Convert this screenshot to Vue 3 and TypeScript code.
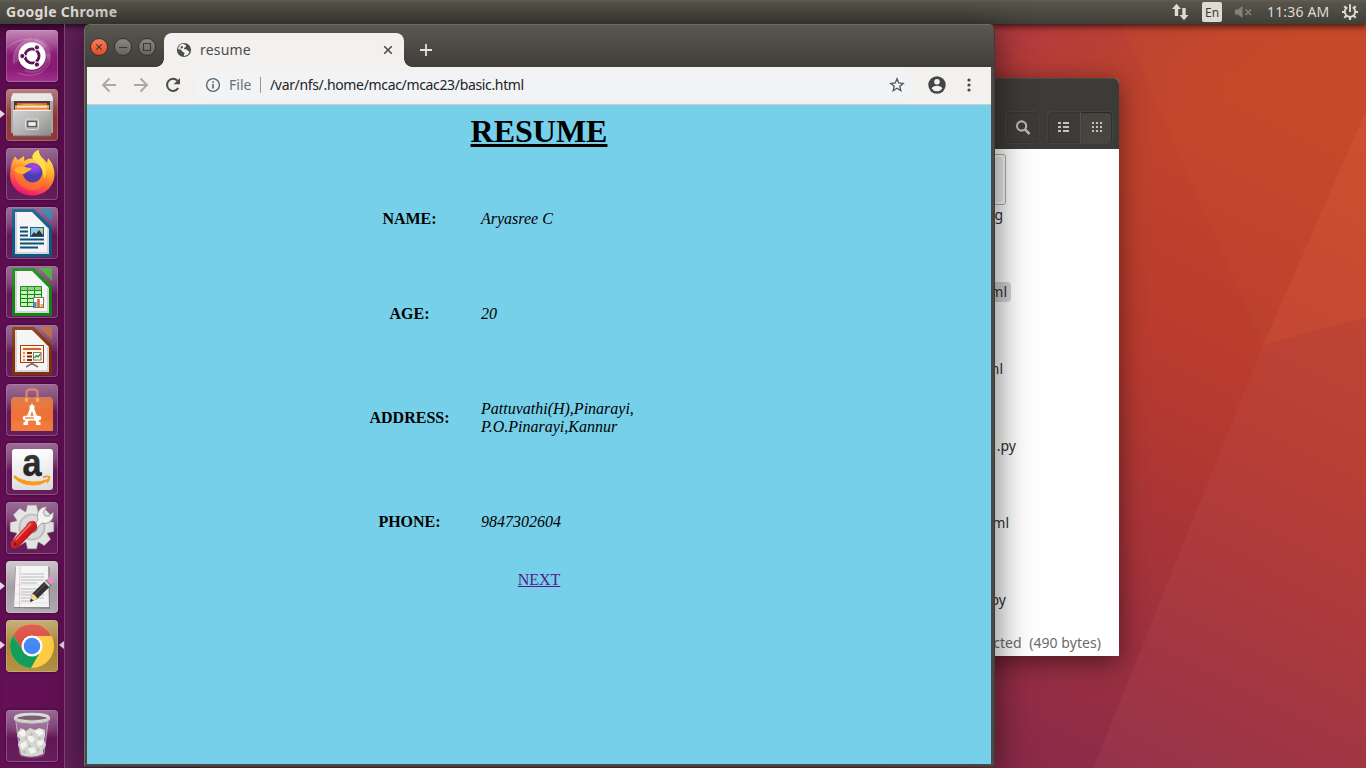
<script setup lang="ts">
interface Entry {
  label: string
  lines: string[]
  height: string
}

interface FileRow {
  name: string
  end: number
  selected?: boolean
}

const entries: Entry[] = [
  { label: 'NAME:', lines: ['Aryasree C'], height: 'short' },
  { label: 'AGE:', lines: ['20'], height: 'short' },
  { label: 'ADDRESS:', lines: ['Pattuvathi(H),Pinarayi,', 'P.O.Pinarayi,Kannur'], height: 'tall' },
  { label: 'PHONE:', lines: ['9847302604'], height: 'short' },
]

const files: FileRow[] = [
  { name: 'g', end: 116 },
  { name: 'ml', end: 108, selected: true },
  { name: 'ml', end: 116 },
  { name: '.py', end: 103 },
  { name: 'ml', end: 110 },
  { name: 'py', end: 113 },
]

const gearTeeth = [0, 45, 90, 135, 180, 225, 270, 315]
const gridDots = [0, 1, 2]
const paperLines = [13, 16, 19, 22, 28, 31, 34, 37, 40]
</script>

<template>
  <div class="desktop">
    <svg class="wallpaper" viewBox="0 0 1366 768" preserveAspectRatio="none">
      <defs>
        <linearGradient id="wall" gradientUnits="userSpaceOnUse" x1="1330" y1="130" x2="980" y2="830">
          <stop offset="0" stop-color="#c4472a" />
          <stop offset=".38" stop-color="#b73a2f" />
          <stop offset=".6" stop-color="#a53339" />
          <stop offset="1" stop-color="#82274f" />
        </linearGradient>
        <linearGradient id="wallLeft" x1="0" y1="0" x2="1" y2="0">
          <stop offset="0" stop-color="#6a2362" />
          <stop offset="1" stop-color="#5d1d56" />
        </linearGradient>
        <linearGradient id="wallTop" gradientUnits="userSpaceOnUse" x1="990" y1="20" x2="1130" y2="180">
          <stop offset="0" stop-color="#a8344c" stop-opacity=".75" />
          <stop offset="1" stop-color="#b23a35" stop-opacity="0" />
        </linearGradient>
      </defs>
      <rect width="1366" height="768" fill="url(#wall)" />
      <rect x="800" width="566" height="500" fill="url(#wallTop)" />
      <path d="M1121 24H1366V110L1263 345Z" fill="#d0602f" fill-opacity=".13" />
      <path d="M1366 110V317L1263 345Z" fill="#ea6c45" fill-opacity=".22" />
      <path d="M1263 345L1366 317V768H1093Z" fill="#c86464" fill-opacity=".13" />
      <rect width="200" height="768" fill="url(#wallLeft)" />
    </svg>

    <section class="files-window">
      <header class="files-header">
        <span class="tool single">
          <svg width="18" height="18" viewBox="0 0 18 18"><circle cx="7.6" cy="7" r="4.6" fill="none" stroke="#b9b6ac" stroke-width="2.1" /><path d="M11 10.4L15.5 15" stroke="#b9b6ac" stroke-width="2.6" /></svg>
        </span>
        <span class="tool-group">
          <span class="tool">
            <svg width="14" height="14" viewBox="0 0 14 14" fill="#c5c2b8"><template v-for="n in gridDots" :key="n"><rect x="1" :y="1 + n * 4" width="3" height="2" /><rect x="6" :y="1 + n * 4" width="6" height="2" /></template></svg>
          </span>
          <span class="tool active">
            <svg width="14" height="14" viewBox="0 0 14 14" fill="#c5c2b8"><template v-for="n in gridDots" :key="n"><rect v-for="m in gridDots" :key="m" :x="2 + m * 4" :y="1 + n * 4" width="2" height="2" /></template></svg>
          </span>
        </span>
      </header>
      <div class="files-body">
        <div class="thumb-row"><span class="thumb"></span></div>
        <div v-for="(file, i) in files" :key="i" class="file-row" :style="{ paddingRight: file.end + 'px' }">
          <span :class="{ selected: file.selected }">{{ file.name }}</span>
        </div>
        <div class="files-status">cted&nbsp; (490 bytes)</div>
      </div>
    </section>

    <header class="panel">
      <span class="panel-title">Google Chrome</span>
      <div class="indicators">
        <svg class="net" width="18" height="18" viewBox="0 0 18 18" fill="#dfdbd2"><path d="M5.5 .8L10 6H7.2V13H3.8V6H1ZM13 17.2L8.5 12H11.3V5H14.7V12H17.5Z" /></svg>
        <span class="lang">En</span>
        <svg class="mute" width="18" height="14" viewBox="0 0 18 14" fill="#858279"><path d="M0 4.5H3L7.5 1V13L3 9.5H0Z" /><path d="M10.5 4.5L16 10M16 4.5L10.5 10" stroke="#858279" stroke-width="1.7" /></svg>
        <span class="clock">11:36 AM</span>
        <svg class="power" width="18" height="18" viewBox="0 0 18 18"><g stroke="#dfdbd2" fill="none"><path d="M6.3 4.3A5.2 5.2 0 1 0 11.7 4.3" stroke-width="1.9" /><path d="M9 1.2V9" stroke-width="1.9" /><path d="M1 9H4M14 9H17M9 14V17M3.3 3.3L5.3 5.3M12.7 5.3L14.7 3.3M3.3 14.7L5.3 12.7M12.7 12.7L14.7 14.7" stroke-width="2.2" /></g></svg>
      </div>
    </header>

    <nav class="launcher">
      <div class="tile dash">
        <svg viewBox="0 0 52 52">
          <path d="M8 33C5 10 32 3 40 17L26 26ZM44 23C43 38 33 47 18 41L26 26Z" fill="#fff" fill-opacity=".15" />
          <path d="M27 8C42 8 47 20 43 31L33 14Z" fill="#fff" fill-opacity=".14" />
          <path d="M1 18C14 5 36 8 40 17M44 24C46 40 30 50 12 43M8 34C6 22 12 12 26 8" fill="none" stroke="#e9b5dc" stroke-opacity=".35" />
          <circle cx="26" cy="27" r="14" fill="#3c0434" fill-opacity=".45" />
          <circle cx="26" cy="26" r="13.7" fill="#fff" />
          <circle cx="26" cy="26" r="7" fill="none" stroke="#5e1151" stroke-width="3" />
          <path d="M26 26L14 26M26 26L32 15.6M26 26L32 36.4" stroke="#fff" stroke-width="1.2" />
          <g fill="#5e1151" stroke="#fff" stroke-width="1"><circle cx="16.3" cy="26" r="2.6" /><circle cx="30.9" cy="17.4" r="2.6" /><circle cx="30.9" cy="34.6" r="2.6" /></g>
          <circle cx="26" cy="26" r="5.4" fill="#fff" />
        </svg>
      </div>
      <div class="tile cabinet">
        <i class="running"></i>
        <svg viewBox="0 0 52 52">
          <defs><linearGradient id="cab" x1="0" y1="0" x2="1" y2="1"><stop offset="0" stop-color="#d2d2d1" /><stop offset=".5" stop-color="#b5b5b3" /><stop offset="1" stop-color="#8c8c89" /></linearGradient></defs>
          <path d="M7 4.2H45L47 9V44H5V9Z" fill="#a9a9a6" />
          <path d="M7 4.2H45L47 9V12H5V9Z" fill="#e6e6e4" />
          <rect x="8" y="12" width="36" height="10" fill="#3a302b" />
          <path d="M11 14H41V22H11Z" fill="#d0602e" /><path d="M9 16.5L20 15L43 16V22H9Z" fill="#f5a35a" />
          <path d="M11 17.8H41" stroke="#fff" stroke-width="1" /><path d="M9 19.6H43" stroke="#dc7632" stroke-width=".7" />
          <path d="M7 21H45V47H7Z" fill="url(#cab)" /><path d="M7 21.5H45" stroke="#f1f1f0" /><path d="M7 47H45" stroke="#6b6b69" />
          <rect x="19.5" y="30" width="13" height="10.5" rx="2" fill="#aaa" stroke="#e0e0df" />
          <rect x="21.8" y="32.5" width="8.5" height="5" fill="#f0f0ef" stroke="#555" stroke-width="1.2" />
        </svg>
      </div>
      <div class="tile">
        <svg viewBox="0 0 52 52">
          <defs>
            <linearGradient id="fox" x1=".8" y1="0" x2=".4" y2="1"><stop offset="0" stop-color="#fff04a" /><stop offset=".35" stop-color="#ffc02d" /><stop offset=".62" stop-color="#ff7531" /><stop offset="1" stop-color="#f21471" /></linearGradient>
            <radialGradient id="globe" cx=".6" cy=".2"><stop offset="0" stop-color="#b72fee" /><stop offset=".5" stop-color="#7642e5" /><stop offset="1" stop-color="#4b3cb0" /></radialGradient>
          </defs>
          <path d="M5 18C6 13 8 10 9 8.5L12 12L18 8L18.5 13C22 10 25 10 27 11C25 7 29 3 33 2C32 8 38 10 41 15L42 10C46 14 48 19 48.5 25C49 38 39 47.5 26 47.5C13 47.5 3.5 38 4 26Z" fill="url(#fox)" />
          <path d="M10 18C14 14 19 17 26 20C25 22 22 22 21 24C18 27 19 31 22 33C28 37 35 34 37 29C42 40 27 46 18 40C8 34 7 25 10 18Z" fill="#ff8a22" fill-opacity=".5" />
          <circle cx="26.5" cy="24.5" r="9.8" fill="url(#globe)" />
          <path d="M8 22C12 16 19 19 26 20.5C24 23 21 23.5 18 26C14 26 10 25 8 22Z" fill="#ffb02b" />
          <path d="M27 11C25 7 29 3 33 2C32 11 45 15 38.5 31C37.5 21 33 15 27 11Z" fill="#ffdf3f" fill-opacity=".85" />
        </svg>
      </div>
      <div class="tile">
        <svg viewBox="0 0 52 52">
          <path d="M7 2H28L46 20V48Q46 50 44 50H8Q6 50 6 48V3Z" fill="#0d5985" />
          <path d="M33 2H44Q46 2 46 4V15Z" fill="#2d7eac" />
          <path d="M9 5H26L43 22V47H9Z" fill="#f5f5f5" /><path d="M10 5V46H42V22" fill="none" stroke="#d4d6d8" stroke-width="2" />
          <path d="M14 20.5H22M14 24.5H22M14 28.5H22M14 32.5H38M14 36.5H38M14 40.5H32" stroke="#0e5179" stroke-width="2" />
          <rect x="24.5" y="20.5" width="13" height="9" fill="#8fcbed" stroke="#12618e" /><circle cx="35.5" cy="22.5" r="1.6" fill="#f3c52e" /><path d="M25 29L28 25L30 27L33 23L37 28V29Z" fill="#333" />
        </svg>
      </div>
      <div class="tile">
        <svg viewBox="0 0 52 52">
          <path d="M7 2H28L46 20V48Q46 50 44 50H8Q6 50 6 48V3Z" fill="#158415" />
          <path d="M33 2H44Q46 2 46 4V15Z" fill="#41ad35" />
          <path d="M9 5H26L43 22V47H9Z" fill="#f5f5f5" /><path d="M10 5V46H42V22" fill="none" stroke="#d4d6d8" stroke-width="2" />
          <rect x="14.5" y="20.5" width="21" height="20" fill="#c9f3c1" /><path d="M14.5 20.5H35.5V40.5H14.5ZM14.5 24.5H35.5M14.5 28.5H35.5M14.5 32.5H35.5M14.5 36.5H35.5M21.5 20V40M28.5 20V40" fill="none" stroke="#118510" />
          <rect x="14.5" y="20.5" width="21" height="4" fill="#48b33e" fill-opacity=".5" />
          <rect x="27.5" y="31.5" width="10" height="10" fill="#fff" stroke="#777" /><path d="M29.3 36V41" stroke="#2491df" stroke-width="2.4" /><path d="M32.5 33V41" stroke="#e25f1d" stroke-width="2.6" /><path d="M35.7 38V41" stroke="#f1b719" stroke-width="2.4" />
        </svg>
      </div>
      <div class="tile">
        <svg viewBox="0 0 52 52">
          <path d="M7 2H28L46 20V48Q46 50 44 50H8Q6 50 6 48V3Z" fill="#813209" />
          <path d="M33 2H44Q46 2 46 4V15Z" fill="#b66437" />
          <path d="M9 5H26L43 22V47H9Z" fill="#f5f5f5" /><path d="M10 5V46H42V22" fill="none" stroke="#d4d6d8" stroke-width="2" />
          <path d="M26 38V40M26 38.5L20 42M26 38.5L32 42" stroke="#777" stroke-width="1.8" />
          <rect x="14.5" y="20.5" width="23" height="17" fill="#fff4ea" stroke="#a23d08" /><path d="M17 24H35" stroke="#db5c1c" stroke-width="2" />
          <path d="M17 28H19M17 31.5H19M17 35H19" stroke="#ed8760" stroke-width="2" /><path d="M21 28H26M21 31.5H26M21 35H26" stroke="#7a2d08" stroke-width="2" />
          <rect x="27.5" y="27.5" width="7.5" height="7.5" fill="#fff" stroke="#777" /><path d="M28.5 33L30.5 30.5L32 32L34.5 29" fill="none" stroke="#28912a" stroke-width="1.3" />
        </svg>
      </div>
      <div class="tile">
        <svg viewBox="0 0 52 52">
          <defs><linearGradient id="bag" x1="0" y1="0" x2="0" y2="1"><stop offset="0" stop-color="#d77343" /><stop offset=".3" stop-color="#ec7539" /><stop offset="1" stop-color="#f07336" /></linearGradient></defs>
          <path d="M7 13H45L47 16V47H5V16Z" fill="url(#bag)" /><path d="M5 37H47V47H5Z" fill="#ff9b54" fill-opacity=".2" />
          <path d="M20.5 18V9Q20.5 5.5 24 5.5H28Q31.5 5.5 31.5 9V18" fill="none" stroke="#d27b54" stroke-width="2.4" /><path d="M20.5 14V18M31.5 14V18" stroke="#f4a377" stroke-width="3.2" />
          <path d="M19.7 40L26 23L32.3 40M17.5 39.5H22M30 39.5H34.5M23.5 23H28.5" fill="none" stroke="#fff" stroke-width="3" />
          <rect x="16.7" y="31.7" width="18.6" height="4.8" rx="2.4" fill="#fff" /><path d="M19 34H28" stroke="#ed7237" stroke-width="1.3" />
        </svg>
      </div>
      <div class="tile">
        <svg viewBox="0 0 52 52">
          <defs><linearGradient id="amz" x1="0" y1="0" x2="0" y2="1"><stop offset="0" stop-color="#fff" /><stop offset="1" stop-color="#dedede" /></linearGradient></defs>
          <rect x="6" y="6" width="41" height="41" rx="3" fill="url(#amz)" />
          <text x="26" y="33.2" class="amazon-letter" text-anchor="middle" textLength="19" lengthAdjust="spacingAndGlyphs">a</text>
          <path d="M8 34C17 43.5 33 44.5 42 36.5C32 40.5 19 40.5 8.5 33Z" fill="#f99b18" stroke="#f99b18" stroke-width="1.1" /><path d="M37 34.5Q41 32.5 43.3 33.8Q43.3 37 41 40" fill="none" stroke="#f99b18" stroke-width="1.8" />
        </svg>
      </div>
      <div class="tile">
        <svg viewBox="0 0 52 52">
          <defs><linearGradient id="red" x1="0" y1="0" x2="1" y2="1"><stop offset="0" stop-color="#ed6662" /><stop offset=".5" stop-color="#d51d20" /><stop offset="1" stop-color="#86080c" /></linearGradient></defs>
          <g fill="#e2e2e1" stroke="#a5a4a5" stroke-width=".5"><path v-for="a in gearTeeth" :key="a" d="M19.5 12L21.5 3.2H30.5L32.5 12Z" :transform="`rotate(${a} 26 25)`" /></g>
          <circle cx="26" cy="25" r="16.3" fill="#e4e4e3" /><circle cx="26" cy="25" r="13.5" fill="#bdbcbd" /><circle cx="26" cy="25" r="11.5" fill="#d9d8d8" /><circle cx="26" cy="25" r="6" fill="#8f6d8c" />
          <path d="M27 24L32 18C30 11 34 4 41 5L37 10L39 14L43 14L47 10C49 18 42 23 36 21L30 27Z" fill="#f4f4f3" stroke="#888" stroke-width=".8" />
          <path d="M6 39L24 19.5Q29 17.5 30.5 21.5Q32 25 30 27L13 44.5Q9 48 6 45.5Q3.5 42 6 39Z" fill="url(#red)" /><path d="M9.5 38L25 21.5" stroke="#ef7775" stroke-width="1.5" /><circle cx="9" cy="42" r="1.6" fill="#7b1722" />
        </svg>
      </div>
      <div class="tile editor">
        <i class="running"></i>
        <svg viewBox="0 0 52 52">
          <path d="M9 6H44V48L8 47Z" fill="#746e74" fill-opacity=".6" /><path d="M10 5H42L43 46H8Z" fill="#f4f4f4" />
          <g stroke="#aaa" stroke-width=".8"><path v-for="y in paperLines" :key="y" :d="`M15 ${y}H${y === 22 ? 31 : y === 40 ? 26 : 38}`" /></g>
          <path d="M14 5L13.5 46" stroke="#edaaaa" stroke-width=".7" /><path d="M8.5 24H42M8.5 33H42M8.5 42H42" stroke="#c8d9ee" stroke-width=".6" />
          <path d="M24 41L26 33L40.5 18.5L45.5 24L31 38Z" fill="#313131" /><path d="M28 34.5L42 20.5" stroke="#666" stroke-width=".9" />
          <path d="M24 41L25.8 33Q29 33 31.5 38Z" fill="#f1d790" /><path d="M24 41L25 37.5L27.5 39.5Z" fill="#222" /><path d="M40 19L43.5 16Q48.5 16 47.8 20.5L44.5 24Z" fill="#e78ec2" /><path d="M38.7 20L43.7 25.2" stroke="#d7d7d7" stroke-width="2" />
        </svg>
      </div>
      <div class="tile browser">
        <i class="running"></i><i class="focused"></i>
        <svg viewBox="0 0 52 52">
          <circle cx="26" cy="26" r="22" fill="#ffcd41" />
          <path d="M7 15A22 22 0 0 1 45.5 16H26A10 10 0 0 0 17.3 31Z" fill="#db4c3f" />
          <path d="M7 15L17.3 31A10 10 0 0 0 34.7 31L25 48A22 22 0 0 1 7 15Z" fill="#129e5a" />
          <circle cx="26" cy="26" r="10.5" fill="#fff" /><circle cx="26" cy="26" r="8.3" fill="#4387f6" />
        </svg>
      </div>
      <div class="tile trash">
        <svg viewBox="0 0 52 52">
          <path d="M9 9L14 46Q26 50 38 46L43 9Z" fill="#eee" fill-opacity=".24" /><path d="M10 12L14 44M42 12L38 44" stroke="#e8dce6" stroke-opacity=".5" />
          <path d="M12 22L15 18L20 21L24 18L29 20L33 18L39 20V26L38 30L40 35L37 40V44Q26 49 15 45L14 39L12 35L14 29L11 26Z" fill="#d6d6d1" />
          <g fill="#f4f4f1"><path d="M12 23L18 19L20 25L16 27ZM28 21L35 19L38 24L33 26ZM20 28L25 25L29 29L26 33ZM31 31L38 30L36 35L32 36ZM14 34L20 31L21 36L16 39ZM22 39L28 37L30 42L25 44Z" /></g>
          <g fill="#b9b9b4"><path d="M18 28L21 27L22 30ZM25 22L28 25L24 26ZM32 28L35 27L33 30ZM22 37L24 34L25 37ZM16 42L19 40L20 44ZM31 38L34 39L32 43Z" /></g>
          <ellipse cx="26" cy="8" rx="16.7" ry="3.8" fill="#59504f" fill-opacity=".55" stroke="#d9dad6" stroke-width="2.8" /><path d="M8 8V10Q26 17 44 10V8Q26 15 8 8" fill="#cacbc7" />
        </svg>
      </div>
    </nav>

    <section class="chrome-window">
      <header class="titlebar">
        <div class="controls">
          <span class="control close"><svg viewBox="0 0 16 16"><path d="M5.3 5.3L10.7 10.7M10.7 5.3L5.3 10.7" /></svg></span>
          <span class="control"><svg viewBox="0 0 16 16"><path d="M4 8.5H12" /></svg></span>
          <span class="control"><svg viewBox="0 0 16 16"><path d="M4.5 4.5H11.5V11.5H4.5Z" /></svg></span>
        </div>
        <div class="tab">
          <svg class="favicon" width="16" height="16" viewBox="0 0 16 16"><circle cx="8" cy="8" r="7.1" fill="#4d4d4b" /><path d="M7 1.7C9 3 10.3 2.4 10 4.2C9.7 5.6 8.5 5 8 6.3C7.6 7.5 9.5 7.2 10.5 7.6C12 8.3 11.8 9.6 13.5 9.5C13 12 10.8 13.9 8 13.9C7.3 12.7 9 12 8.4 11C7.7 9.9 6 10.2 5.8 8.6C5 7.7 3.5 7.3 2.1 7.3C2.3 4.3 4.4 2.1 7 1.7Z" fill="#f2f1ef" /><path d="M4.8 4.4Q7 3.1 7.1 5.5Q5.8 6.8 4.4 6.4Z" fill="#4d4d4b" /></svg>
          <span class="tab-title">resume</span>
          <svg class="tab-close" width="12" height="12" viewBox="0 0 12 12"><path d="M2.2 2.2L9.8 9.8M9.8 2.2L2.2 9.8" stroke="#4a4a48" stroke-width="1.6" /></svg>
        </div>
        <svg class="new-tab" width="14" height="14" viewBox="0 0 14 14"><path d="M7 1V13M1 7H13" stroke="#e5e2da" stroke-width="1.8" /></svg>
      </header>
      <div class="toolbar">
        <svg class="nav" width="16" height="16" viewBox="0 0 16 16"><path d="M15 8H2M8.5 1.5L2 8L8.5 14.5" fill="none" stroke="#a9a8a6" stroke-width="1.9" /></svg>
        <svg class="nav" width="16" height="16" viewBox="0 0 16 16"><path d="M1 8H14M7.5 1.5L14 8L7.5 14.5" fill="none" stroke="#a9a8a6" stroke-width="1.9" /></svg>
        <svg class="nav" width="16" height="16" viewBox="0 0 16 16"><path d="M13.2 11A6 6 0 1 1 12.4 3.7" fill="none" stroke="#4b4b49" stroke-width="2" /><path d="M15 1V7.3H8.7Z" fill="#4b4b49" /></svg>
        <div class="omnibox">
          <svg width="16" height="16" viewBox="0 0 16 16"><circle cx="8" cy="8" r="6.4" fill="none" stroke="#5f6368" stroke-width="1.4" /><path d="M8 7V11.6M8 4.2V5.8" stroke="#5f6368" stroke-width="1.6" /></svg>
          <span class="scheme">File</span>
          <span class="divider"></span>
          <span class="url">/var/nfs/.home/mcac/mcac23/basic.html</span>
          <svg class="star" width="16" height="16" viewBox="0 0 16 16"><path d="M8 1.8L9.7 6L14.2 6.4L10.8 9.3L11.8 13.7L8 11.3L4.2 13.7L5.2 9.3L1.8 6.4L6.3 6Z" fill="none" stroke="#4f5357" stroke-width="1.3" /></svg>
        </div>
        <svg class="avatar" width="18" height="18" viewBox="0 0 18 18"><circle cx="9" cy="9" r="8.7" fill="#454545" /><circle cx="9" cy="5.8" r="2.8" fill="#f2f1ef" /><path d="M3.6 12.5Q5 9.8 9 9.8Q13 9.8 14.4 12.5Q12.5 15.3 9 15.3Q5.5 15.3 3.6 12.5Z" fill="#f2f1ef" /></svg>
        <svg class="menu" width="4" height="14" viewBox="0 0 4 14" fill="#454545"><circle cx="2" cy="2" r="1.6" /><circle cx="2" cy="7" r="1.6" /><circle cx="2" cy="12" r="1.6" /></svg>
      </div>
      <main class="page">
        <h1>RESUME</h1>
        <dl>
          <div v-for="entry in entries" :key="entry.label" class="entry" :class="entry.height">
            <dt>{{ entry.label }}</dt>
            <dd><div v-for="line in entry.lines" :key="line">{{ line }}</div></dd>
          </div>
        </dl>
        <a class="next">NEXT</a>
      </main>
    </section>
  </div>
</template>

<style>
html,
body {
  margin: 0;
  overflow: hidden;
}
</style>

<style scoped>
.desktop {
  position: relative;
  width: 1366px;
  height: 768px;
  overflow: hidden;
  font-family: "Noto Sans", "Open Sans", sans-serif;
  font-size: 14px;
}
svg {
  display: block;
  flex: none;
}
.wallpaper {
  position: absolute;
  inset: 0;
  width: 100%;
  height: 100%;
}

/* Top panel */
.panel {
  position: absolute;
  inset: 0 0 auto;
  height: 24px;
  box-sizing: border-box;
  display: flex;
  align-items: center;
  justify-content: space-between;
  padding: 0 7px 1px 6px;
  color: #dfdbd2;
  background: linear-gradient(#605e50 0, #56544a 3px, #3f3e39 100%);
  box-shadow: 0 1px 7px 1px rgba(0, 0, 0, 0.75);
}
.panel-title {
  font-weight: bold;
  letter-spacing: 0.3px;
}
.indicators {
  display: flex;
  align-items: center;
}
.net,
.mute,
.power {
  margin-top: 1px;
}
.lang {
  margin: 1px 13px 0 13px;
  width: 20px;
  height: 20px;
  border-radius: 2px;
  background: #dfdbd2;
  color: #3c3b37;
  font-size: 12px;
  line-height: 21px;
  text-align: center;
}
.clock {
  margin: 0 12px 0 14px;
  width: 62px;
  font-size: 14px;
  letter-spacing: 0.16px;
  white-space: nowrap;
}

/* Launcher */
.launcher {
  position: absolute;
  top: 24px;
  bottom: 0;
  left: 0;
  width: 65px;
  box-sizing: border-box;
  padding: 6px 0 6px 6px;
  display: flex;
  flex-direction: column;
  gap: 7px;
  background: linear-gradient(#520b48 0, #5c0e50 50px, #641056 100%);
  border-right: 1px solid #85487e;
  box-shadow: inset 0 7px 7px -5px rgba(0, 0, 0, 0.65);
}
.tile {
  position: relative;
  width: 52px;
  height: 52px;
  border-radius: 4px;
  background: linear-gradient(#8d5987, #7c3a73 38%, #641857 55%, #681e5d);
  box-shadow: inset 0 0 0 1px rgba(255, 255, 255, 0.22), 0 0 3px rgba(20, 0, 18, 0.6);
}
.tile svg {
  width: 52px;
  height: 52px;
  overflow: visible;
}
.tile::after {
  content: "";
  position: absolute;
  inset: 1px 1px 26px;
  border-radius: 4px 4px 50% 50% / 4px 4px 12px 12px;
  background: linear-gradient(rgba(255, 255, 255, 0.12), rgba(255, 255, 255, 0.01));
}
.dash {
  background: linear-gradient(#bb78ae, #8c1d78 48%, #8b1c76 75%, #a33492);
}
.cabinet {
  background: linear-gradient(#b06d6b, #8e383b 55%, #943b40);
}
.editor {
  background: linear-gradient(#c8c2c8, #a69ea5 50%, #b4adb3);
}
.browser {
  background: linear-gradient(#c0a565, #ab8637 50%, #b49346);
}
.trash {
  margin-top: 31px;
}
.amazon-letter {
  font: bold 39px "Liberation Sans", sans-serif;
  fill: #262626;
  stroke: #262626;
  stroke-width: 0.5px;
}
.running,
.focused {
  position: absolute;
  top: 21px;
  left: -6px;
  border: solid transparent;
  border-width: 4px 0 4px 5px;
  border-left-color: #e0d8df;
}
.focused {
  left: 53px;
  border-width: 4px 5px 4px 0;
  border-right-color: #e0d8df;
}

/* File manager */
.files-window {
  position: absolute;
  left: 700px;
  top: 78px;
  width: 419px;
  height: 578px;
  border-radius: 6px 6px 0 0;
  background: #fff;
  box-shadow: 0 5px 26px rgba(0, 0, 0, 0.5);
  overflow: hidden;
}
.files-header {
  box-sizing: border-box;
  height: 71px;
  padding: 32px 6px 5px 0;
  display: flex;
  justify-content: flex-end;
  gap: 8px;
  background: #3c3b37;
  border-top: 1px solid #4c4b47;
}
.tool {
  width: 32px;
  height: 31px;
  display: flex;
  align-items: center;
  justify-content: center;
}
.single,
.tool-group {
  height: 31px;
  border: 1px solid #45443f;
  border-radius: 5px;
  box-shadow: inset 0 0 0 1px #353430;
}
.single {
  width: 31px;
}
.tool-group {
  display: flex;
}
.tool-group .active {
  box-sizing: border-box;
  background: #464540;
  border-left: 1px solid #52514c;
  border-radius: 0 4px 4px 0;
  box-shadow: inset 0 1px 1px #282724, inset -1px 0 #33322f;
}
.files-body {
  display: flex;
  flex-direction: column;
  color: #303030;
}
.thumb-row {
  height: 56px;
  padding: 5px 113px 0 0;
  box-sizing: border-box;
  display: flex;
  justify-content: flex-end;
}
.thumb {
  box-sizing: border-box;
  width: 60px;
  height: 51px;
  border: 1px solid #adadad;
  border-radius: 3px;
  background: #f1f1f4;
  box-shadow: inset 0 0 0 2px #fff;
}
.file-row {
  box-sizing: border-box;
  height: 77px;
  text-align: right;
  line-height: 20px;
}
.file-row span {
  display: inline-block;
  height: 20px;
}
.file-row .selected {
  padding: 0 4px;
  border-radius: 4px;
  background: #d8d6d4;
}
.files-status {
  margin-top: -34px;
  padding-right: 18px;
  line-height: 20px;
  text-align: right;
  letter-spacing: 0.06px;
  color: #6a6a6a;
}

/* Browser window */
.chrome-window {
  position: absolute;
  left: 84px;
  top: 24px;
  width: 911px;
  height: 743px;
  box-sizing: border-box;
  padding: 0 3px 2px 2px;
  border: 1px solid #6d6c66;
  border-right-color: #3d3c37;
  border-bottom-color: #3d3c37;
  border-radius: 6px 6px 2px 2px;
  background: #4a4943;
  box-shadow: 0 6px 34px 3px rgba(0, 0, 0, 0.5);
  display: flex;
  flex-direction: column;
}
.titlebar {
  flex: none;
  height: 42px;
  margin: 0 -3px 0 -2px;
  display: flex;
  align-items: flex-start;
  border-radius: 5px 5px 0 0;
  background: linear-gradient(#59574e, #3f3e39);
}
.controls {
  display: flex;
  gap: 6px;
  padding: 13px 8px 0 5px;
}
.control {
  width: 18px;
  height: 18px;
  box-sizing: border-box;
  border: 1px solid #33322e;
  border-radius: 50%;
  background: linear-gradient(#8a887f, #65645d);
}
.control svg {
  width: 16px;
  height: 16px;
  fill: none;
  stroke: #3a3935;
  stroke-width: 1.1;
}
.control.close {
  background: linear-gradient(#f67d5a, #e9491f);
}
.tab {
  position: relative;
  box-sizing: border-box;
  width: 240px;
  height: 34px;
  margin-top: 8px;
  padding: 0 10px 0 12px;
  display: flex;
  align-items: center;
  gap: 8px;
  border-radius: 8px 8px 0 0;
  background: #f2f1ef;
  color: #4c4c4a;
  letter-spacing: 0.2px;
}
.tab-title {
  padding-bottom: 2px;
}
.tab::before,
.tab::after {
  content: "";
  position: absolute;
  bottom: 0;
  left: -8px;
  width: 8px;
  height: 8px;
  background: radial-gradient(circle at 0 0, transparent 7.5px, #f2f1ef 8px);
}
.tab::after {
  left: auto;
  right: -8px;
  background: radial-gradient(circle at 100% 0, transparent 7.5px, #f2f1ef 8px);
}
.tab-close {
  margin-left: auto;
}
.new-tab {
  margin: 18px 0 0 15px;
}
.toolbar {
  flex: none;
  height: 38px;
  box-sizing: border-box;
  display: flex;
  align-items: center;
  padding: 0 20px 1px 14px;
  background: #f2f1ef;
  border-bottom: 1px solid #cfcecb;
}
.nav {
  margin-right: 16px;
}
.omnibox {
  flex: none;
  width: 719px;
  height: 28px;
  margin-left: -2px;
  box-sizing: border-box;
  display: flex;
  align-items: center;
  padding: 0 9px 0 10px;
  border-radius: 14px;
  background: #f1f3f4;
}
.scheme {
  margin-left: 8px;
  width: 24px;
  padding-bottom: 2px;
  color: #6b6f73;
}
.divider {
  width: 1px;
  height: 16px;
  margin: 0 9px 0 7px;
  background: #96999c;
}
.url {
  padding-bottom: 2px;
  color: #222427;
  letter-spacing: -0.34px;
}
.star {
  margin-left: auto;
}
.avatar {
  margin-left: 14px;
}
.menu {
  margin-left: auto;
}

/* Page */
.page {
  flex: 1;
  background: #77d0ea;
  color: #000;
  font: 16px "Liberation Serif", serif;
  text-align: center;
}
h1 {
  margin: 0;
  padding-top: 8px;
  height: 58px;
  font-size: 32px;
  line-height: 37px;
  text-decoration: underline;
}
dl {
  margin: 0 0 0 276px;
}
.entry {
  display: grid;
  grid-template-columns: 93px 1fr;
  column-gap: 25px;
  align-items: center;
  height: 95px;
}
.tall {
  height: 113px;
}
dt {
  font-weight: bold;
}
dd {
  margin: 0;
  text-align: left;
  font-style: italic;
  line-height: 18px;
}
.next {
  display: block;
  line-height: 18px;
  margin-top: 2px;
  color: #551a8b;
  text-decoration: underline;
}
</style>
